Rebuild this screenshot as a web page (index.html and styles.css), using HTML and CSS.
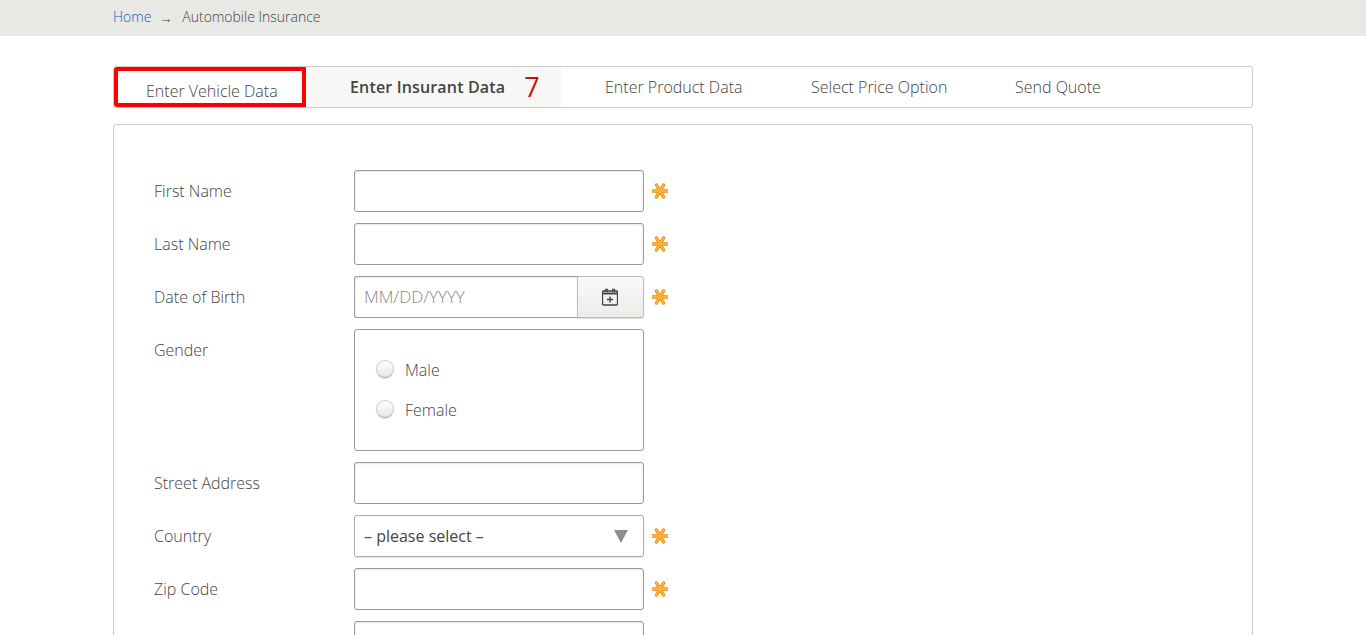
FILE: index.html
```html
<!DOCTYPE html>
<html lang="en">
<head>
    <meta charset="UTF-8">
    <meta name="viewport" content="width=device-width, initial-scale=1.0">
    <title>Automobile Insurance</title>
    <link rel="stylesheet" href="styles.css">
</head>
<body>
    <svg class="defs" width="0" height="0">
        <symbol id="star" viewBox="0 0 16 16">
            <path d="M1 8h14M4.5 2l7 12M11.5 2l-7 12" stroke="#e8890f" stroke-width="3.4" stroke-linecap="round" fill="none"/>
            <path d="M1 8h14M4.5 2l7 12M11.5 2l-7 12" stroke="#fdb338" stroke-width="2" stroke-linecap="round" fill="none"/>
        </symbol>
    </svg>

    <div class="breadcrumb">
        <div class="wrap breadcrumb-row">
            <a class="home" href="#">Home</a>
            <span class="arrow">&rarr;</span>
            <span>Automobile Insurance</span>
        </div>
    </div>

    <div class="wrap">
        <nav class="tabs">
            <a class="tab tab-vehicle" href="#">Enter Vehicle Data</a>
            <a class="tab tab-insurant" href="#"><b>Enter Insurant Data</b><span class="count">7</span></a>
            <a class="tab tab-product" href="#">Enter Product Data</a>
            <a class="tab tab-price" href="#">Select Price Option</a>
            <a class="tab tab-quote" href="#">Send Quote</a>
        </nav>

        <form class="card">
            <div class="row">
                <label for="firstname">First Name</label>
                <input type="text" id="firstname">
                <svg class="req"><use href="#star"/></svg>
            </div>
            <div class="row">
                <label for="lastname">Last Name</label>
                <input type="text" id="lastname">
                <svg class="req"><use href="#star"/></svg>
            </div>
            <div class="row">
                <label for="birthdate">Date of Birth</label>
                <div class="date-group">
                    <input type="text" id="birthdate" placeholder="MM/DD/YYYY">
                    <button type="button" class="cal-btn" aria-label="Open calendar">
                        <svg width="16" height="18" viewBox="0 0 16 18" fill="none" stroke="#444">
                            <path d="M1 3.5h14a.5.5 0 0 1 .5.5v12.5a1 1 0 0 1-1 1h-13a1 1 0 0 1-1-1V4a.5.5 0 0 1 .5-.5z" transform="translate(0 -.5)" stroke-width="1.3"/>
                            <path d="M1 5.5h14" stroke-width="2"/>
                            <path d="M3.5 4V1.2h2V4M10.5 4V1.2h2V4" stroke-width="1.1"/>
                            <path d="M8 8.5v6M5 11.5h6" stroke-width="1.4"/>
                        </svg>
                    </button>
                </div>
                <svg class="req"><use href="#star"/></svg>
            </div>
            <div class="row">
                <label>Gender</label>
                <div class="radio-box">
                    <label class="radio"><span class="radio-dot"></span>Male</label>
                    <label class="radio"><span class="radio-dot"></span>Female</label>
                </div>
            </div>
            <div class="row">
                <label for="street">Street Address</label>
                <input type="text" id="street">
            </div>
            <div class="row">
                <label for="country">Country</label>
                <div class="select-box" id="country">
                    <span>&ndash; please select &ndash;</span>
                    <span class="caret"></span>
                </div>
                <svg class="req"><use href="#star"/></svg>
            </div>
            <div class="row">
                <label for="zip">Zip Code</label>
                <input type="text" id="zip">
                <svg class="req"><use href="#star"/></svg>
            </div>
            <div class="row">
                <label></label>
                <input type="text" id="city" aria-label="City">
            </div>
        </form>
    </div>
</body>
</html>
```

FILE: styles.css
```css
html, body {
    height: 635px;
    overflow: hidden;
}

body {
    margin: 0;
    font-family: "Open Sans", "Liberation Sans", sans-serif;
    font-weight: 300;
    font-size: 16px;
    color: #444;
    background: #fff;
}

a {
    color: inherit;
    text-decoration: none;
}

.defs {
    display: block;
    height: 0;
}

.wrap {
    width: 1140px;
    margin: 0 auto;
}

.breadcrumb {
    height: 36px;
    background: #e8e8e4;
    font-size: 14px;
}

.breadcrumb-row {
    display: flex;
    align-items: center;
    height: 33px;
}

.home {
    color: #0f62b8;
}

.arrow {
    width: 9px;
    margin: 2px 14px 0 8px;
    font-size: 13px;
    color: #444;
}

.tabs {
    display: flex;
    height: 40px;
    margin-top: 30px;
    border: 1px solid #ccc;
    border-radius: 3px;
}

.tab {
    display: flex;
    align-items: center;
    line-height: 40px;
}

.tab-vehicle {
    box-sizing: border-box;
    width: 192px;
    height: 40px;
    padding: 8px 0 0 28px;
    border: 4px solid #f00;
    border-radius: 3px 0 0 3px;
}

.tab-insurant {
    width: 211px;
    padding-left: 44px;
    background: #f7f7f5;
    color: #444;
}

.tab-insurant b {
    font-weight: 600;
    letter-spacing: 0.16px;
}

.count {
    margin-left: 19px;
    font-size: 27px;
    font-weight: 400;
    color: #c8140c;
}

.tab-product {
    margin-left: 44px;
    width: 205px;
}

.tab-price {
    width: 204px;
    margin-left: 1px;
}

.card {
    margin-top: 16px;
    padding: 45px 40px 40px;
    border: 1px solid #ccc;
    border-radius: 3px;
}

.row {
    display: flex;
    align-items: flex-start;
    margin-bottom: 11px;
}

.row > label {
    width: 200px;
    line-height: 42px;
}

input {
    box-sizing: border-box;
    width: 290px;
    height: 42px;
    padding: 0 9px;
    font: inherit;
    color: #444;
    border: 1px solid #999;
    border-radius: 3px;
    box-shadow: inset 0 1px 2px rgba(0, 0, 0, 0.1);
    outline: none;
}

input::placeholder {
    font-size: 17px;
    color: #888;
    opacity: 1;
}

.date-group {
    display: flex;
    width: 290px;
}

.date-group input {
    width: 224px;
    border-right: none;
    border-radius: 3px 0 0 3px;
}

.cal-btn {
    display: flex;
    align-items: center;
    justify-content: center;
    width: 67px;
    height: 42px;
    margin-left: -1px;
    padding: 0 2px 0 0;
    background: linear-gradient(to bottom, #fafafa, #ebebe8);
    border: 1px solid #bbb;
    border-radius: 0 3px 3px 0;
    box-shadow: 0 1px 1px rgba(0, 0, 0, 0.15);
}

.req {
    width: 16px;
    height: 16px;
    margin: 13px 0 0 8px;
}

.radio-box {
    box-sizing: border-box;
    width: 290px;
    height: 122px;
    padding: 20px 21px;
    border: 1px solid #999;
    border-radius: 3px;
}

.radio {
    display: flex;
    align-items: center;
    height: 40px;
}

.radio-dot {
    box-sizing: border-box;
    width: 18px;
    height: 18px;
    margin: -2px 11px 0 0;
    border: 1px solid #ccc;
    border-bottom-color: #aaa;
    border-radius: 50%;
    background: linear-gradient(to bottom, #fff, #e6e6e6);
    box-shadow: 0 1px 1px rgba(0, 0, 0, 0.15);
}

.select-box {
    box-sizing: border-box;
    display: flex;
    align-items: center;
    justify-content: space-between;
    width: 290px;
    height: 42px;
    padding: 0 15px 0 9px;
    font-weight: 400;
    border: 1px solid #aaa;
    border-radius: 3px;
    box-shadow: 0 1px 1px rgba(0, 0, 0, 0.12);
}

.caret {
    width: 0;
    height: 0;
    border-left: 7px solid transparent;
    border-right: 7px solid transparent;
    border-top: 13px solid #8f8f8f;
}
```
